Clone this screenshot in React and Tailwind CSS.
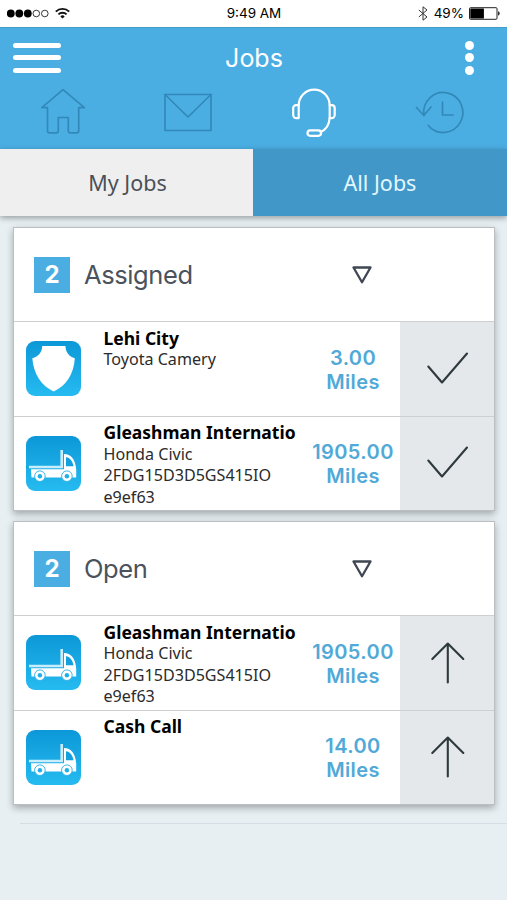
import React, { useState } from 'react';

const sections = [
    {
        title: 'Assigned',
        action: 'check',
        jobs: [
            { icon: 'shield', name: 'Lehi City', details: ['Toyota Camery'], miles: '3.00' },
            { icon: 'truck', name: 'Gleashman Internatio', details: ['Honda Civic', '2FDG15D3D5GS415IO', 'e9ef63'], miles: '1905.00' },
        ],
    },
    {
        title: 'Open',
        action: 'up',
        jobs: [
            { icon: 'truck', name: 'Gleashman Internatio', details: ['Honda Civic', '2FDG15D3D5GS415IO', 'e9ef63'], miles: '1905.00' },
            { icon: 'truck', name: 'Cash Call', details: [], miles: '14.00' },
        ],
    },
];

function StatusBar() {
    return (
        <div className="h-[27px] bg-white grid grid-cols-3 items-center pl-[7px] pr-[6px] text-[13.5px] text-black font-['Inter',sans-serif]">
            <div className="flex items-center gap-[6px]">
                <svg width="42" height="10" viewBox="0 0 42 10">
                    <circle cx="3.8" cy="4.5" r="3.9" />
                    <circle cx="12.3" cy="4.5" r="3.9" />
                    <circle cx="20.8" cy="4.5" r="3.9" />
                    <circle cx="29.3" cy="4.5" r="3.3" fill="none" stroke="#222" strokeWidth="0.9" />
                    <circle cx="37.8" cy="4.5" r="3.3" fill="none" stroke="#222" strokeWidth="0.9" />
                </svg>
                <svg width="15" height="12" viewBox="0 0 15 12" fill="none" stroke="#111" strokeWidth="1.9" className="-mt-px">
                    <path d="M0.8 4.6a9.6 9.6 0 0 1 13.4 0" />
                    <path d="M3.4 7.4a5.9 5.9 0 0 1 8.2 0" />
                    <path d="M7.5 11.6 5.3 9.4a3.2 3.2 0 0 1 4.4 0z" fill="#111" stroke="none" />
                </svg>
            </div>
            <div className="text-center whitespace-nowrap -mt-px">9:49 AM</div>
            <div className="flex items-center justify-end -mt-px">
                <svg width="10" height="15" viewBox="0 0 10 15" fill="none" stroke="#333" strokeWidth="1" className="mr-[6px]">
                    <path d="M0.8 4 9 11 5 14.2V0.8L9 4 0.8 11" />
                </svg>
                <span>49%</span>
                <svg width="32" height="13" viewBox="0 0 32 13" className="ml-[5px]">
                    <rect x="0.5" y="0.7" width="27.5" height="11.6" rx="1" fill="none" stroke="#222" />
                    <rect x="1.3" y="1.5" width="13.6" height="10" />
                    <path d="M29.2 4.3v4.4a2.4 2.4 0 0 0 0-4.4z" />
                </svg>
            </div>
        </div>
    );
}

function HomeIcon() {
    return (
        <path d="M24 1.6 2.8 19.6h5.7v23.2q0 2 2 2h6.8q2 0 2-2V29.5h10v13.3q0 2 2 2h6.4q2 0 2-2V19.6h5.7z" />
    );
}

function MailIcon() {
    return (
        <>
            <rect x="1" y="6.5" width="46" height="36" />
            <path d="M1 6.5 24 29 47 6.5" />
        </>
    );
}

function HeadsetIcon() {
    return (
        <>
            <path d="M8.7 17.5a15.5 15.8 0 0 1 31 0M39.6 30c-.3 6-3.2 11.5-9 14" />
            <path d="M8.7 17.2v12.9H6.2a3 3 0 0 1-3-3v-6.9a3 3 0 0 1 3-3z" />
            <path d="M39.7 17.2v12.9h2a3 3 0 0 0 3-3v-6.9a3 3 0 0 0-3-3z" />
            <rect x="17.5" y="42.3" width="13.6" height="5.5" rx="2.7" />
        </>
    );
}

function HistoryIcon() {
    return (
        <>
            <path d="M8.8 27.2A19.6 20 0 1 1 13.3 37.5" />
            <path d="M1.5 19.5 8.8 27.5 16 19" />
            <path d="M27.5 14v13H38" />
        </>
    );
}

const navItems = [
    { key: 'home', Icon: HomeIcon },
    { key: 'mail', Icon: MailIcon },
    { key: 'support', Icon: HeadsetIcon },
    { key: 'history', Icon: HistoryIcon },
];

function Header() {
    return (
        <header className="h-[122px] bg-[#4baee3] border-t border-[#459bc8]">
            <div className="h-[60px] flex items-center justify-between pl-[13px] pr-[33px]">
                <button type="button" className="w-12 flex flex-col gap-[7.5px] -mt-px">
                    <span className="h-[5px] rounded-full bg-white" />
                    <span className="h-[5px] rounded-full bg-white" />
                    <span className="h-[5px] rounded-full bg-white" />
                </button>
                <h1 className="text-[25px] text-white pl-[21px] pt-px font-['Inter',sans-serif]">Jobs</h1>
                <button type="button" className="w-12 flex flex-col items-end gap-[3.5px] -mt-px">
                    <span className="size-[9px] rounded-full bg-white" />
                    <span className="size-[9px] rounded-full bg-white" />
                    <span className="size-[9px] rounded-full bg-white" />
                </button>
            </div>
            <nav className="w-[502px] grid grid-cols-4 justify-items-center">
                {navItems.map(({ key, Icon }) => (
                    <svg
                        key={key}
                        width="48"
                        height="49"
                        viewBox="0 0 48 49"
                        fill="none"
                        stroke="currentColor"
                        strokeLinejoin="round"
                        strokeLinecap="round"
                        className={`overflow-visible ${key === 'support' ? 'text-white stroke-[2.2]' : 'text-[#3289b9] stroke-[1.7]'}`}
                    >
                        <Icon />
                    </svg>
                ))}
            </nav>
        </header>
    );
}

function JobBadge({ icon }) {
    return (
        <div className="size-[55px] rounded-[9px] bg-linear-to-b from-[#0c98d8] to-[#25bbf0]">
            {icon === 'shield' ? (
                <svg width="55" height="55" viewBox="0 0 55 55" fill="#fff">
                    <path d="M16.2 5H39.5C39.5 11 43 15.5 48.8 17.3C48 33 40 45 27.7 50.5C15.5 45 7.5 33 6.3 17.3C12.5 15.5 16.2 11 16.2 5Z" />
                </svg>
            ) : (
                <svg width="55" height="55" viewBox="0 0 55 55">
                    <path d="M3 31H35.7V14" fill="none" stroke="#c9edfb" strokeWidth="2.6" />
                    <path d="M5 33.2H38V18C45 18 49.5 23.500 50.2 33.500V41.600H5.500Z" fill="#fff" />
                    <path d="M40 21.300C44 21.800 46.500 25 47.500 30.300H40Z" fill="#12a1de" />
                    <circle cx="13.900" cy="40.200" r="5.300" fill="#fff" stroke="#20afe7" strokeWidth="0.9" />
                    <circle cx="13.900" cy="40.200" r="2.200" fill="#20afe7" />
                    <circle cx="40.900" cy="40.200" r="5.300" fill="#fff" stroke="#20afe7" strokeWidth="0.9" />
                    <circle cx="40.900" cy="40.200" r="2.200" fill="#20afe7" />
                </svg>
            )}
        </div>
    );
}

function JobRow({ job, action }) {
    return (
        <div className="h-[94.5px] flex border-t border-[#cdcfd1]">
            <div className="w-[89.5px] shrink-0 pl-3 pt-[19px]">
                <JobBadge icon={job.icon} />
            </div>
            <div className="flex-1 min-w-0 pt-[5.5px] leading-[21.5px] text-[16.1px] text-[#2b2b2b] font-['Noto_Sans',sans-serif] whitespace-nowrap">
                <div className="font-bold text-[17.5px] text-black">{job.name}</div>
                {job.details.map((line) => (
                    <div key={line}>{line}</div>
                ))}
            </div>
            <div className="w-[95px] shrink-0 pt-[1.5px] pl-px flex flex-col justify-center text-center text-xl leading-6 tracking-[0.4px] font-semibold text-[#51a9d8] font-['Inter',sans-serif]">
                <div>{job.miles}</div>
                <div>Miles</div>
            </div>
            <button type="button" className="w-[94px] shrink-0 bg-[#e4e8eb] flex items-center justify-center">
                <svg width="44" height="44" viewBox="0 0 44 44" fill="none" stroke="#2f3a3e" strokeWidth="2.1" strokeLinecap="round" strokeLinejoin="round">
                    {action === 'check' ? <path d="M3.3 19.5 17 35.5 42 6.5" /> : <path d="M22.8 41.5V2.5M7.3 18 22.8 2.5 38.3 18" />}
                </svg>
            </button>
        </div>
    );
}

function JobCard({ section }) {
    const [open, setOpen] = useState(true);

    return (
        <section className="border border-[#bcbfc1] bg-white shadow-[0_3px_7px_rgba(0,0,0,0.3)]">
            <button type="button" onClick={() => setOpen(!open)} className="w-full h-[93px] flex items-center pl-5">
                <span className="size-9 bg-[#4baee3] flex items-center justify-center text-2xl font-bold text-white font-['Inter',sans-serif]">
                    {section.jobs.length}
                </span>
                <span className="w-[253px] ml-[14px] pt-0.5 text-left text-[25.5px] tracking-[-0.4px] text-[#4b525c] font-['Inter',sans-serif]">{section.title}</span>
                <svg width="20" height="18" viewBox="0 0 20 18" fill="none" stroke="#3f4752" strokeWidth="2.3" strokeLinejoin="round" className="ml-[15px]">
                    <path d="M1.5 1.5H18.5L10 16.3Z" />
                </svg>
            </button>
            {open && section.jobs.map((job, i) => <JobRow key={i} job={job} action={section.action} />)}
        </section>
    );
}

export default function App() {
    const [tab, setTab] = useState('all');

    const tabClass = (key) => (tab === key ? 'bg-[#4198c8] text-[#e3f7ff]' : 'bg-[#efefef] text-[#4a5057]');

    return (
        <div className="h-[900px] bg-[#e7eff3] overflow-hidden">
            <StatusBar />
            <Header />
            <div className="h-[67px] grid grid-cols-[253px_254px] text-[21.5px] font-['Noto_Sans',sans-serif] shadow-[0_2px_6px_rgba(0,0,0,0.35)]">
                <button type="button" onClick={() => setTab('my')} className={`pt-0.5 pl-0.5 ${tabClass('my')}`}>My Jobs</button>
                <button type="button" onClick={() => setTab('all')} className={`pt-0.5 ${tabClass('all')}`}>All Jobs</button>
            </div>
            <main className="pt-[11px] pl-[13px] pr-3 flex flex-col gap-[10px]">
                {sections.map((section) => (
                    <JobCard key={section.title} section={section} />
                ))}
            </main>
            <div className="mt-[18px] ml-5 h-px bg-[#d6dee5]" />
        </div>
    );
}
